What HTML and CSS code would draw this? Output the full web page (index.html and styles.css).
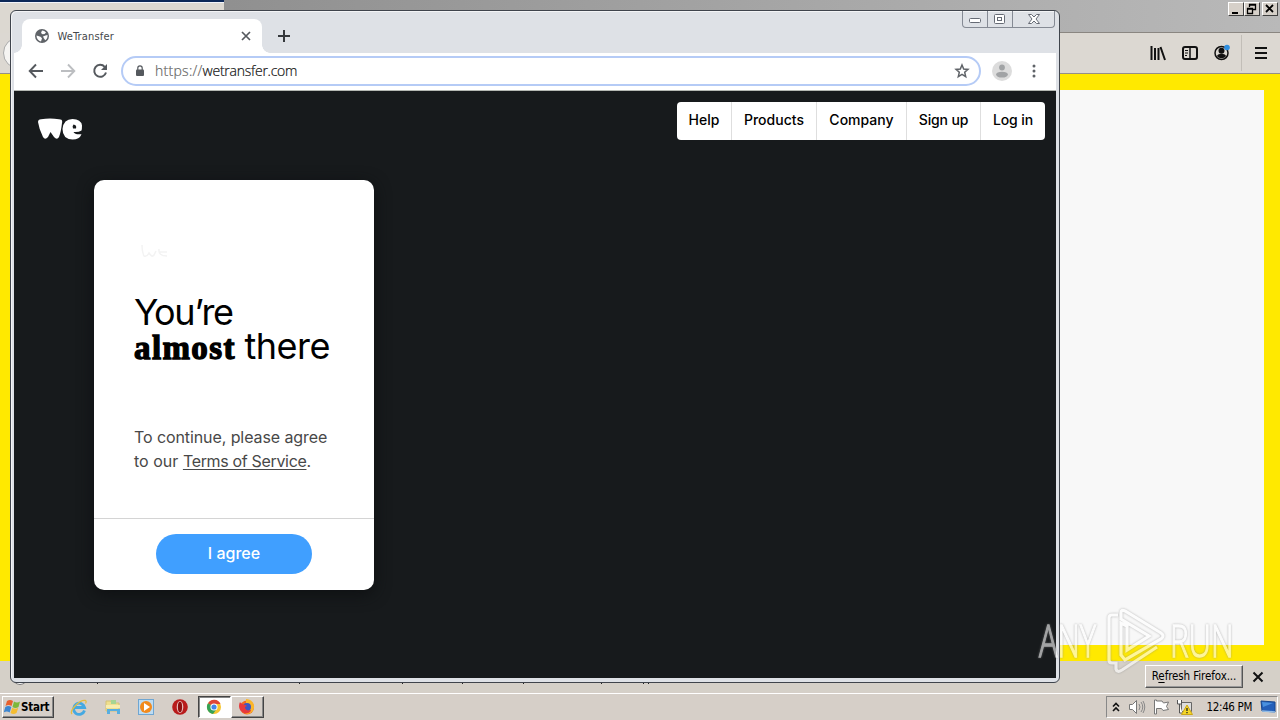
FILE: index.html
```html
<!DOCTYPE html>
<html lang="en">
<head>
<meta charset="utf-8">
<title>WeTransfer</title>
<link rel="stylesheet" href="styles.css">
</head>
<body>
<div class="desktop">
  <div class="firefox">
    <div class="ff-title">
      <div class="ff-tab"></div>
      <div class="win-buttons">
        <span class="classic"><svg width="16" height="14"><path d="M4 10h6v2H4z"/></svg></span>
        <span class="classic"><svg width="16" height="14"><path d="M5.500 5V2.500h6v5H9M5 3h7M3.500 6.500h5v5h-5zM3 7h6" fill="none" stroke="#000" stroke-width="1.300"/></svg></span>
        <span class="classic close"><svg width="16" height="14"><path d="M4 3l7 7M11 3l-7 7" stroke="#000" stroke-width="1.800"/></svg></span>
      </div>
    </div>
    <div class="ff-bar">
      <span class="ff-back"></span>
      <svg class="ff-icon" width="16" height="16" viewBox="0 0 16 16"><path d="M1.500 1v14M5 3v12M8.500 3v12M10.500 2l4.500 13" fill="none" stroke="#111" stroke-width="2"/></svg>
      <svg class="ff-icon" width="16" height="16" viewBox="0 0 16 16"><rect x="1" y="2" width="14" height="12" rx="2" fill="none" stroke="#111" stroke-width="2"/><path d="M8 2v12" stroke="#111" stroke-width="1.500"/><path d="M3 5.500h3M3 8h3M3 10.500h2" stroke="#111"/></svg>
      <svg class="ff-icon account" width="16" height="18" viewBox="0 0 16 18"><circle cx="7.500" cy="10" r="6.500" fill="none" stroke="#111" stroke-width="1.500"/><circle cx="7.500" cy="7.800" r="3" fill="#111"/><path d="M3 13c1-3 8-3 9 0-2 3-7 3-9 0z" fill="#111"/><circle cx="13" cy="4.500" r="2.800" fill="#2f8fe0"/></svg>
      <span class="ff-sep"></span>
      <svg class="ff-icon" width="12" height="16" viewBox="0 0 12 16"><path d="M0 3h12M0 8h12M0 13h12" stroke="#111" stroke-width="2"/></svg>
    </div>
    <div class="ff-page"><div class="ff-panel"></div></div>
    <div class="ff-notice">
      <span class="notice-circle"></span>
      <svg class="ticks" width="560" height="2"><path d="M0 0h1v2H0zM202 0h1v2h-1zM305 0h1v2h-1zM365 0h1v2h-1zM426 0h1v2h-1zM504 0h1v2h-1zM546 0h1v2h-1zM551 0h1v2h-1z" fill="#222"/></svg>
      <button class="refresh">R<u>e</u>fresh Firefox...</button>
      <svg class="notice-close" width="12" height="12"><path d="M1.500 1.500l9 9M10.500 1.500l-9 9" stroke="#111" stroke-width="2"/></svg>
    </div>
  </div>

  <div class="taskbar">
    <button class="start"><svg width="17" height="16" viewBox="0 0 17 16"><path d="M3 2q3-2 6 0L7.500 7q-3-2-6 0z" fill="#e8602c"/><path d="M10 2.500q3 2 6 0L14.500 8q-3 2-6 0z" fill="#7db83a"/><path d="M1.300 8q3-2 6 0L5.700 13.500q-3-2-6 0z" fill="#3d86d0"/><path d="M8.300 8.800q3 2 6 0L12.500 14q-3 2-6 0z" fill="#f5bd31"/></svg><span>Start</span></button>
    <div class="quick">
      <svg width="18" height="18" viewBox="0 0 18 18"><path d="M14.500 12.500A5.600 5.600 0 1 1 14.600 9.500H5" fill="none" stroke="#45a9e2" stroke-width="2.800"/><path d="M2 16c-3-3 8-15 13.500-13.500 1 .5.700 2 0 3" fill="none" stroke="#e5bd42" stroke-width="1.300"/></svg>
      <svg width="18" height="18" viewBox="0 0 18 18"><path d="M2 3h5l1 2h7v8H2z" fill="#efdf8e" stroke="#d4c277"/><path d="M7 2h5v4H7z" fill="#a6d593"/><path d="M2 7h14v3H2z" fill="#f7edb0"/><path d="M3 16v-5h13v5h-3v-3H6v3z" fill="#58aee0"/></svg>
      <svg width="18" height="18" viewBox="0 0 18 18"><rect x="1.500" y="1.500" width="15" height="15" fill="#bedcf2" stroke="#6fa6d2"/><circle cx="9" cy="9" r="6" fill="#f28a1c"/><path d="M7 5l6 4-6 4z" fill="#fff"/></svg>
      <svg width="18" height="18" viewBox="0 0 18 18"><circle cx="9" cy="9" r="7.800" fill="#b81c1c"/><ellipse cx="9" cy="9" rx="3.300" ry="6" fill="#e9c4c4"/><ellipse cx="9" cy="9" rx="2.100" ry="5.300" fill="#8f1010"/></svg>
    </div>
    <div class="task active"><svg width="16" height="16" viewBox="0 0 16 16"><circle cx="8" cy="8" r="7" fill="#f6c52f"/><path d="M8 8L2 4.300A7 7 0 0 1 14.500 5H8z" fill="#df4637"/><path d="M8 8L2 4.300A7 7 0 0 0 7 15l4-5.500z" fill="#36a255"/><circle cx="8" cy="8" r="3.600" fill="#fff"/><circle cx="8" cy="8" r="2.600" fill="#4387ea"/></svg></div>
    <div class="task"><svg width="18" height="18" viewBox="0 0 18 18"><circle cx="9" cy="9.500" r="7" fill="#f36b22"/><path d="M8 1c5 0 9 4 8 9-1 5-6 7-10 5 5 1 7-2 6-5-1-2-3-3-4-5z" fill="#fbb629"/><circle cx="9" cy="9" r="4" fill="#3b57c4"/><path d="M2 4c-2 4-1 9 4 11 4 1 7-1 7-3-3 1-6 0-6-3l2-1c-2-2-5-1-7-4z" fill="#e83a3d"/></svg></div>
    <div class="tray">
      <svg class="chev" width="8" height="11"><path d="M1 4.500l3-3 3 3M1 9l3-3 3 3" fill="none" stroke="#111" stroke-width="1.600"/></svg>
      <svg width="18" height="16" viewBox="0 0 18 16"><path d="M1.500 5.500h3l4-4v13l-4-4h-3z" fill="#fff" stroke="#777"/><path d="M11 5q2 3 0 6M13 3q3.500 5 0 10M15 2q3.500 6 0 12" fill="none" stroke="#888"/></svg>
      <svg width="17" height="16" viewBox="0 0 17 16"><path d="M1.500 1v14h2V9.500h5l1.500 2 5.500-1-2-3 2-4.500-5 1L9 2H3.500V1z" fill="#fff" stroke="#777"/></svg>
      <svg class="net" width="17" height="16" viewBox="0 0 17 16"><path d="M5.500 3.500h10v9h-10z" fill="#ddd" stroke="#666"/><path d="M1.500 1v4h4V1M3.500 5v9h3" fill="#fff" stroke="#555"/><path d="M11 6l5.500 9.500h-11z" fill="#f4d628" stroke="#cda716"/><path d="M11 9v3M11 13v1.300" stroke="#222" stroke-width="1.300"/></svg>
      <span class="clock">12:46 PM</span>
      <svg class="show" width="16" height="14" viewBox="0 0 16 14"><path d="M1 1l14 1v10l-13-1z" fill="#245fb9" stroke="#17468d"/><path d="M2 2l11 1L3 7z" fill="#4a91df"/><path d="M2 11l13 1" stroke="#92bce6" stroke-width="1.500"/></svg>
    </div>
  </div>

  <div class="chrome">
    <div class="tabstrip">
      <div class="tab">
        <svg class="globe" width="14" height="14" viewBox="0 0 14 14"><circle cx="7" cy="7" r="7" fill="#5f6368"/><path d="M1.500 6.500l4 1.200 1.500 1.600-1 3.200C3.500 12 1.500 9.500 1.500 6.500zM7 1.500c1.500 0 3 .7 4 2L9.500 5l-2 .2L6 4zM12.500 6c.3 2-.5 4-2.200 5.300L9 9.500l-1-2 2.500-1z" fill="#fff"/></svg>
        <span class="tab-title">WeTransfer</span>
        <svg width="10" height="10"><path d="M1 1l8 8M9 1L1 9" stroke="#55595e" stroke-width="1.700"/></svg>
      </div>
      <svg class="newtab" width="12" height="12"><path d="M6 0v12M0 6h12" stroke="#35383c" stroke-width="2"/></svg>
      <div class="aero">
        <span><svg width="13" height="6"><rect x=".5" y=".5" width="11" height="4" rx="1" fill="#fff" stroke="#666b75"/></svg></span>
        <span><svg width="12" height="10"><rect x=".5" y=".5" width="10" height="9" rx="1" fill="#fff" stroke="#666b75"/><rect x="3.500" y="3.500" width="4" height="3" fill="none" stroke="#666b75"/></svg></span>
        <span class="wide"><svg width="12" height="10" viewBox="0 0 12 10"><path d="M.5.5h3L6 3 8.500.5h3L8 5l3.500 4.500h-3L6 7 3.500 9.500h-3L4 5z" fill="#fff" stroke="#666b75"/></svg></span>
      </div>
    </div>
    <div class="toolbar">
      <svg class="nav" width="16" height="16" viewBox="0 0 16 16"><path d="M15 8H2M8 1.500L1.700 8 8 14.500" fill="none" stroke="#55595e" stroke-width="1.900"/></svg>
      <svg class="nav" width="16" height="16" viewBox="0 0 16 16"><path d="M1 8h13M8 1.500L14.300 8 8 14.500" fill="none" stroke="#bcbec1" stroke-width="1.900"/></svg>
      <svg class="nav" width="16" height="16" viewBox="0 0 16 16"><path d="M12.700 3.800A6 6 0 1 0 14 9.500" fill="none" stroke="#55595e" stroke-width="2"/><path d="M15 1v6H9z" fill="#55595e"/></svg>
      <div class="omnibox">
        <svg class="lock" width="10" height="12" viewBox="0 0 10 12"><rect x="1" y="4.500" width="8" height="6.500" rx="1" fill="#55595e"/><path d="M2.800 5V3a2.200 2.200 0 0 1 4.400 0v2" fill="none" stroke="#55595e" stroke-width="1.200"/></svg>
        <span class="url"><i>https://</i>wetransfer.com</span>
        <svg class="star" width="16" height="16" viewBox="0 0 16 16"><path d="M8 2l1.700 4 4.300.4-3.300 2.900 1 4.300L8 11.400l-3.700 2.200 1-4.300L2 6.400 6.300 6z" fill="none" stroke="#5f6368" stroke-width="1.500"/></svg>
      </div>
      <svg class="avatar" width="20" height="20" viewBox="0 0 20 20"><circle cx="10" cy="10" r="10" fill="#dcdcdc"/><circle cx="10" cy="6.500" r="2.900" fill="#a1a3a5"/><ellipse cx="10" cy="13.600" rx="6" ry="2.900" fill="#a1a3a5"/></svg>
      <svg class="dots" width="4" height="14"><g fill="#5f6368"><circle cx="2" cy="2" r="1.500"/><circle cx="2" cy="7" r="1.500"/><circle cx="2" cy="12" r="1.500"/></g></svg>
    </div>
    <main class="page">
      <svg class="logo" width="46" height="22" viewBox="0 0 46 22"><path d="M1 4Q1 1.500 4 1.200Q13-.2 22 1.200Q26 1.200 25 5Q24 14 22 19Q20 22.500 17 19L13.500 14 11 19Q8 22.500 6 19Q2 11 1 4z" fill="#fff"/><path d="M44.500 12.500Q41.500 14.500 36.500 14 38 17 44.500 16.200 42.500 21.500 35.500 21.500 25.500 21 25.500 11 26.500 1 35.500 1 44 1 45 7.500 45 11 44.500 12.500zM39 10.500Q40 7 36.500 6.500 35 8 36 10.500z" fill="#fff" fill-rule="evenodd"/></svg>
      <nav class="menu"><a>Help</a><a>Products</a><a>Company</a><a>Sign up</a><a>Log in</a></nav>
      <section class="card">
        <div class="card-body">
          <svg class="ghost" width="28" height="13" viewBox="0 0 28 13"><path d="M1 0q0 7 2 11 3 1 5-3 3 5 5 2l2-4M18 4q-1 7 8 7M19 7h7" fill="none" stroke="#f3f3f3" stroke-width="1.500"/></svg>
          <h1><span class="line line1">You’re</span><span class="line"><b>almost</b><span class="line2">there</span></span></h1>
          <p><span class="p1">To continue, please agree</span><br><span class="p2">to our <u>Terms of Service</u>.</span></p>
        </div>
        <div class="card-foot"><button class="agree">I agree</button></div>
      </section>
    </main>
  </div>

  <div class="watermark">
    <span class="any">ANY</span>
    <svg width="60" height="66" viewBox="0 0 60 66"><path d="M14 5Q14 1 18 3L54 25Q58 28 54 31L18 52 14 47V15L20 18V42L42 28 14 11zM11 7H5Q2 7 2 10V52Q2 55 5 55H9V61Q10 65 15 62L50 39" fill="none" stroke="#fff" stroke-width="3.200"/></svg>
    <span class="run">RUN</span>
  </div>
</div>
</body>
</html>
```
FILE: styles.css
```css
* { box-sizing: border-box; }
body { margin: 0; font-family: "Liberation Sans", Arial, sans-serif; }
button { font-family: inherit; padding: 0; margin: 0; }
svg { display: block; flex: none; }
.desktop { position: relative; width: 1280px; height: 720px; overflow: hidden; background: #d6cfc8; display: flex; flex-direction: column; }

.firefox { height: 692px; display: flex; flex-direction: column; }
.ff-title { height: 33px; display: flex; justify-content: space-between; background: linear-gradient(90deg, #878787 0, #b9b9b9 100%); border-bottom: 1px solid #8a8681; }
.ff-tab { width: 224px; height: 33px; background: #dcd8d1; border-top: 2px solid #0c2858; box-shadow: inset 0 1px #f2f4fa; }
.win-buttons { display: flex; padding: 2px 2px 0 0; }
.classic { width: 16px; height: 14px; background: #d6d0c9; border: 1px solid; border-color: #fff #404040 #404040 #fff; }
.classic svg { margin: -1px; }
.close { margin-left: 2px; }
.ff-bar { height: 41px; display: flex; align-items: center; justify-content: flex-end; gap: 16px; padding-right: 13px; background: #dcd8d2; border-bottom: 1px solid #958f88; }
.ff-back { width: 32px; height: 32px; border-radius: 50%; border: 1px solid #aaa; background: #f5f4f2; margin: 0 auto 0 3px; }
.account { margin-top: -3px; }
.ff-sep { width: 1px; height: 36px; background: #c2beb8; margin: 0 -3px 0 -5px; }
.ff-page { height: 587px; background: #ffe900; padding: 16px 16px 16px; }
.ff-panel { height: 100%; background: #f8f8f8; }
.ff-notice { flex: 1; background: #d5d0c8; display: flex; align-items: center; justify-content: flex-end; padding-right: 16px; }
.notice-circle { width: 16px; height: 17px; border: 1px solid #777; border-radius: 50%; background: #fff; margin: 0 0 0 12px; }
.ticks { margin: 12px auto 0 69px; }
.refresh { width: 98px; height: 23px; margin-top: -1px; border: 1px solid; border-color: #fff #555 #555 #fff; box-shadow: inset -1px -1px #999; background: #d8d1ca; font: 11.500px "DejaVu Sans Condensed", "DejaVu Sans", sans-serif; letter-spacing: -.1px; color: #000; white-space: nowrap; }
.notice-close { margin-left: 9px; margin-top: 1px; }

.taskbar { height: 28px; border-top: 1px solid #d6cfc8; box-shadow: inset 0 1px #fff; background: #d6cfc8; display: flex; align-items: center; padding: 1px 2px 0; }
.start { height: 22px; width: 52px; display: flex; align-items: center; padding-left: 1px; background: #d6cfc8; border: 1px solid; border-color: #fff #444 #444 #fff; box-shadow: inset -1px -1px #888; color: #000; font: bold 11.500px "DejaVu Sans Condensed", "DejaVu Sans", sans-serif; letter-spacing: -.25px; }
.quick { display: flex; gap: 15.700px; margin: 0 9px 0 16px; }
.task { width: 33px; height: 22px; display: grid; place-items: center; border: 1px solid; border-color: #fff #444 #444 #fff; box-shadow: inset -1px -1px #888; }
.task svg { margin-right: 1px; }
.task.active { background: #fff; border-color: #444 #fff #fff #444; box-shadow: inset 1px 1px #888; }
.tray { width: 172px; height: 22px; margin-left: auto; display: flex; align-items: center; padding: 0 1px 0 5px; border: 1px solid; border-color: #888 #fff #fff #888; }
.chev { margin-right: 8px; }
.tray svg + svg + svg { margin-left: 6.500px; }
.clock { margin-left: auto; margin-right: 8px; color: #000; font: 11.500px "DejaVu Sans Condensed", "DejaVu Sans", sans-serif; letter-spacing: -.35px; white-space: nowrap; }
.tray .clock + .show { margin-left: 0; }

.chrome { position: absolute; left: 10px; top: 10px; width: 1050px; height: 673px; border: 1px solid #3f444c; border-radius: 6px; background: #dee1e6; padding: 0 3px 4px; display: flex; flex-direction: column; box-shadow: inset 1px 1px #f3f4f6; }
.tabstrip { height: 42px; display: flex; padding: 0 1px 0 8px; }
.tab { height: 34px; width: 240px; margin-top: 8px; background: #fff; border-radius: 8px 8px 0 0; display: flex; align-items: center; padding: 0 11px 0 13px; position: relative; }
.tab::before, .tab::after { content: ""; position: absolute; bottom: 0; width: 8px; height: 8px; }
.tab::before { left: -8px; background: radial-gradient(circle at 0 0, transparent 7.500px, #fff 8px); }
.tab::after { right: -8px; background: radial-gradient(circle at 100% 0, transparent 7.500px, #fff 8px); }
.tab-title { font: 11px "DejaVu Sans Condensed", "DejaVu Sans", sans-serif; color: #45484c; letter-spacing: .15px; margin: 0 auto 0 8.500px; }
.newtab { margin: 19px auto 0 16px; }
.aero { width: 93px; height: 17px; display: flex; border: 1px solid #858a94; border-top: 0; border-radius: 0 0 4px 4px; }
.aero span { width: 25px; display: grid; place-items: center; border-right: 1px solid #858a94; }
.aero span:first-child { padding-top: 4px; }
.aero .wide { flex: 1; border: 0; }
.toolbar { height: 38px; background: #fff; border-bottom: 1px solid #b5b8b3; display: flex; align-items: center; padding: 0 20px 1px 14px; }
.nav { margin-right: 16px; }
.omnibox { margin-left: -3px; width: 860px; height: 30px; border: 2px solid #b5cbf6; border-radius: 15px; display: flex; align-items: center; padding: 0 9px 0 12px; }
.lock { margin-top: -1px; }
.url { margin: -2px auto 0 10px; color: #111; font: 14px "Open Sans", "Noto Sans", sans-serif; font-weight: 300; letter-spacing: -.25px; -webkit-text-stroke: .2px currentColor; }
.url i { font-style: normal; color: #666; letter-spacing: .28px; }
.avatar { margin-left: 11px; }
.dots { margin-left: auto; }

.page { flex: 1; background: #171a1c; display: grid; grid-template-columns: auto auto; grid-template-rows: 89px auto; justify-content: space-between; color: #000; font-family: Inter, "Liberation Sans", sans-serif; }
.logo { margin: 27px 0 0 23px; }
.menu { margin: 11px 11px 0 0; height: 38px; width: 368px; display: flex; border-radius: 4px; background: #fff; font-size: 14px; font-weight: 450; line-height: 36px; overflow: hidden; }
.menu a { border-left: 1px solid #dedede; text-align: center; white-space: nowrap; width: 85px; letter-spacing: .02px; }
.menu a:first-child { border: 0; width: 54px; }
.menu a:nth-child(3) { width: 90px; }
.menu a:nth-child(4) { width: 74px; letter-spacing: -.15px; }
.menu a:nth-child(5) { width: 65px; letter-spacing: -.1px; }
.card { margin-left: 80px; width: 280px; height: 410px; border-radius: 10px; background: #fff; display: flex; flex-direction: column; box-shadow: 0 4px 16px #0e1012; }
.card-body { height: 338px; padding: 65px 0 0 40px; }
.ghost { margin-left: 7px; }
h1 { margin: 37px 0 0; font-size: 36px; font-weight: 400; line-height: 34px; white-space: nowrap; }
.line { display: flex; align-items: baseline; height: 34px; }
.line1 { letter-spacing: -1.550px; }
h1 b { width: 102px; font-family: "Liberation Serif", serif; font-size: 33px; line-height: 30px; font-weight: 700; letter-spacing: 1.400px; -webkit-text-stroke: 1.300px #000; }
.line2 { letter-spacing: -.5px; margin-left: 8.500px; }
p { margin: 62px 0 0; font-size: 16px; line-height: 24px; color: #484848; white-space: nowrap; }
.p1 { letter-spacing: -.09px; }
.p2 { letter-spacing: .02px; }
.p2 u { letter-spacing: -.33px; }
u { text-underline-offset: 2px; text-decoration-thickness: 1px; }
.card-foot { flex: 1; border-top: 1px solid #d4d4d4; padding-top: 15px; display: flex; justify-content: center; align-items: flex-start; }
.agree { width: 156px; height: 40px; border: 0; border-radius: 20px; background: #409fff; color: #fff; font-size: 16px; font-weight: 500; padding-bottom: 2px; }

.watermark { position: absolute; left: 1039px; top: 608px; display: flex; color: #fff; opacity: .6; filter: drop-shadow(0 0 1px #888); font: 300 44px/64px "Open Sans", sans-serif; -webkit-text-stroke: 1.300px #fff; }
.watermark svg { margin: 0 0 0 2px; }
.any { width: 66px; transform: scaleX(.7); transform-origin: 0 50%; }
.run { width: 62px; margin-left: 3px; transform: scaleX(.71); transform-origin: 0 50%; }
```
